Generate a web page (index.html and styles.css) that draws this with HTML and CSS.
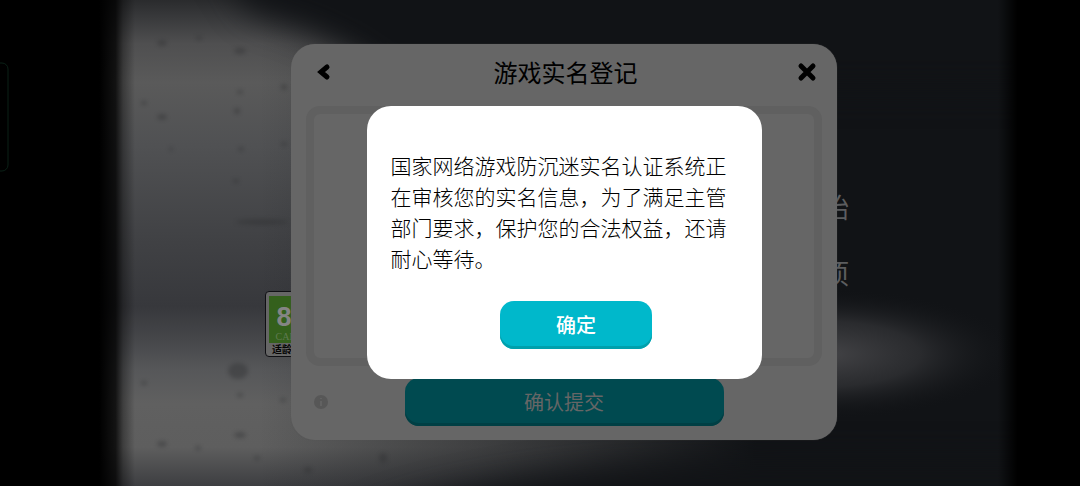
FILE: index.html
```html
<!DOCTYPE html>
<html lang="zh-CN">
<head>
<meta charset="utf-8">
<meta name="viewport" content="width=device-width, initial-scale=1">
<title>游戏实名登记</title>
<link rel="stylesheet" href="styles.css">
</head>
<body>
<main class="stage">
  <svg class="scene" viewBox="0 0 1080 486" preserveAspectRatio="none" aria-hidden="true">
    <defs>
      <linearGradient id="wall" x1="0" y1="0" x2="0" y2="1">
        <stop offset="0" stop-color="#2a2b2d"/>
        <stop offset=".03" stop-color="#363739"/>
        <stop offset=".09" stop-color="#4f4f50"/>
        <stop offset=".17" stop-color="#5a5a5a"/>
        <stop offset=".3" stop-color="#505153"/>
        <stop offset=".5" stop-color="#404144"/>
        <stop offset=".63" stop-color="#37383c"/>
        <stop offset=".7" stop-color="#46474a"/>
        <stop offset=".76" stop-color="#565759"/>
        <stop offset=".83" stop-color="#606060"/>
        <stop offset=".92" stop-color="#5e5e5e"/>
        <stop offset="1" stop-color="#3d3e41"/>
      </linearGradient>
      <linearGradient id="night" x1="0" y1="0" x2="1" y2="0">
        <stop offset=".24" stop-color="#111316" stop-opacity="0"/>
        <stop offset=".44" stop-color="#111316" stop-opacity=".4"/>
        <stop offset=".7" stop-color="#111316" stop-opacity="1"/>
      </linearGradient>
      <linearGradient id="sides" x1="0" y1="0" x2="1" y2="0">
        <stop offset=".092" stop-color="#000"/>
        <stop offset=".107" stop-color="#000" stop-opacity=".8"/>
        <stop offset=".114" stop-color="#000" stop-opacity=".35"/>
        <stop offset=".125" stop-color="#000" stop-opacity="0"/>
        <stop offset=".924" stop-color="#000" stop-opacity="0"/>
        <stop offset=".942" stop-color="#000"/>
      </linearGradient>
      <radialGradient id="glow">
        <stop offset="0" stop-color="#454548"/>
        <stop offset=".5" stop-color="#303134" stop-opacity=".8"/>
        <stop offset="1" stop-color="#111316" stop-opacity="0"/>
      </radialGradient>
      <filter id="soft" color-interpolation-filters="sRGB"><feGaussianBlur stdDeviation="2"/></filter>
      <filter id="haze" x="-20%" y="-80%" width="140%" height="260%" color-interpolation-filters="sRGB"><feGaussianBlur stdDeviation="16"/></filter>
    </defs>
    <rect width="1080" height="486" fill="url(#wall)"/>
    <rect width="1080" height="486" fill="url(#night)"/>
    <path d="M205-60H1180V90H400Q340 34 250 12Z" fill="#111316" filter="url(#haze)"/>
    <path d="M330 540Q420 474 760 460H1180V540Z" fill="#111316" filter="url(#haze)"/>
    <ellipse cx="820" cy="354" rx="200" ry="66" fill="url(#glow)"/>
    <g fill="#2d2e30" opacity=".4" filter="url(#soft)">
      <ellipse cx="162" cy="43" rx="5" ry="3"/><ellipse cx="240" cy="51" rx="6" ry="3"/>
      <ellipse cx="162" cy="117" rx="5" ry="3"/><ellipse cx="144" cy="103" rx="3" ry="2"/>
      <ellipse cx="199" cy="38" rx="3" ry="2"/><ellipse cx="240" cy="92" rx="3" ry="2"/>
      <ellipse cx="237" cy="111" rx="3" ry="3"/><ellipse cx="284" cy="87" rx="3" ry="3"/>
      <ellipse cx="171" cy="149" rx="2" ry="2"/><ellipse cx="241" cy="149" rx="3" ry="2"/>
      <ellipse cx="284" cy="144" rx="3" ry="2"/><ellipse cx="236" cy="181" rx="3" ry="2"/>
      <ellipse cx="262" cy="222" rx="26" ry="3"/><ellipse cx="238" cy="371" rx="10" ry="8"/>
      <ellipse cx="240" cy="395" rx="3" ry="2"/><ellipse cx="240" cy="435" rx="6" ry="3"/>
      <ellipse cx="162" cy="444" rx="5" ry="3"/><ellipse cx="283" cy="400" rx="3" ry="2"/>
      <ellipse cx="144" cy="383" rx="3" ry="2"/><ellipse cx="198" cy="448" rx="3" ry="2"/>
      <ellipse cx="257" cy="458" rx="3" ry="2"/><ellipse cx="383" cy="458" rx="4" ry="5"/>
      <ellipse cx="308" cy="470" rx="4" ry="3"/>
    </g>
    <rect width="1080" height="486" fill="url(#sides)"/>
    <rect x="-20" y="63" width="28" height="108" rx="6" fill="none" stroke="#0a2016"/>
  </svg>

  <div class="age-badge">
    <div class="age-mark"><strong>8+</strong><small>CADPA</small></div>
    <span class="age-note">适龄提示</span>
  </div>
  <nav class="menu"><a href="#start">开始</a><a href="#options">选项</a></nav>

  <section class="panel" aria-labelledby="panel-title">
    <header class="panel-head">
      <button class="icon-button" type="button" aria-label="返回">
        <svg width="20" height="20" viewBox="0 0 20 20"><path d="m13 5-6 5 6 5" fill="none" stroke="currentColor" stroke-width="5" stroke-linecap="round" stroke-linejoin="miter"/></svg>
      </button>
      <h1 class="panel-title" id="panel-title">游戏实名登记</h1>
      <button class="icon-button" type="button" aria-label="关闭">
        <svg width="20" height="20" viewBox="0 0 20 20"><path d="m4 4 12 12M16 4 4 16" fill="none" stroke="currentColor" stroke-width="5" stroke-linecap="round"/></svg>
      </button>
    </header>
    <div class="form-frame"></div>
    <footer class="panel-foot">
      <svg class="info" width="16" height="16" viewBox="0 0 16 16" aria-hidden="true"><circle cx="8" cy="8" r="7" fill="#575757"/><path d="M8 7v5M8 4v1" stroke="#626262" stroke-width="2"/></svg>
      <button class="button submit" type="button">确认提交</button>
    </footer>
  </section>

  <section class="dialog" role="dialog" aria-modal="true" aria-describedby="message">
    <p class="message" id="message">国家网络游戏防沉迷实名认证系统正在审核您的实名信息，为了满足主管部门要求，保护您的合法权益，还请耐心等待。</p>
    <button class="button confirm" type="button">确定</button>
  </section>
</main>
</body>
</html>
```
FILE: styles.css
```css
* { box-sizing: border-box; }

body {
  margin: 0;
  background: #000;
  font-family: "Noto Sans CJK SC", sans-serif;
}

.stage {
  position: relative;
  display: grid;
  place-items: center;
  min-height: 100vh;
  padding: 0 0 2px 48px;
  overflow: hidden;
}

.scene {
  position: absolute;
  inset: 0;
  width: 100%;
  height: 100%;
}

.age-badge {
  position: absolute;
  left: calc(50% - 275px);
  top: calc(50% + 48px);
  width: 54px;
  padding: 4px 3px 2px;
  border: 1px solid #101014;
  border-radius: 4px;
  background: #666;
  text-align: center;
}

.age-mark {
  display: grid;
  height: 47px;
  padding-top: 8px;
  background: #34601c;
  color: #858585;
}

.age-mark strong {
  font: 700 27px/27px "Liberation Sans", sans-serif;
}

.age-mark small {
  color: #5f7a50;
  font: 10px/12px "Liberation Serif", serif;
}

.age-note {
  display: block;
  color: #050505;
  font-size: 10px;
  font-weight: 700;
  line-height: 11px;
  white-space: nowrap;
}

.menu {
  position: absolute;
  right: calc(50% - 309px);
  top: calc(50% - 51px);
  display: grid;
  gap: 36px;
}

.menu a {
  color: #5c5d5f;
  font-size: 27px;
  line-height: 30px;
  text-decoration: none;
}

.panel,
.dialog {
  grid-area: 1 / 1;
  position: relative;
  border-radius: 24px;
}

.panel {
  width: min(546px, 94%);
  padding: 12px 15px 14px;
  background: #666;
  box-shadow: 0 0 1px #555;
}

.panel-head {
  display: flex;
  align-items: center;
  justify-content: space-between;
  height: 32px;
  margin: 0 5px 0 8px;
}

.panel-title {
  margin: 0;
  color: #000;
  font-size: 24px;
  font-weight: 400;
  line-height: 32px;
}

.icon-button {
  display: grid;
  padding: 0;
  border: 0;
  background: none;
  color: #000;
}

.form-frame {
  height: 260px;
  margin-top: 18px;
  border: 8px solid #606060;
  border-radius: 14px;
}

.panel-foot {
  display: grid;
  grid-template-columns: 1fr auto 1fr;
  align-items: center;
  margin-top: 12px;
}

.info { margin-left: 7px; }

.button {
  border: 0;
  border-radius: 14px;
  font: 500 20px/24px "Noto Sans CJK SC", sans-serif;
}

.submit {
  width: 319px;
  height: 48px;
  background: #004a50;
  box-shadow: inset 0 -3px #003f44;
  color: #666;
  font-weight: 400;
}

.dialog {
  display: flex;
  flex-direction: column;
  align-items: center;
  width: min(395px, 90%);
  padding: 44px 24px 30px;
  background: #fff;
}

.message {
  margin: 0 0 27px;
  color: #000;
  font-size: 21px;
  font-weight: 300;
  line-height: 31px;
}

.confirm {
  width: 152px;
  height: 48px;
  margin-left: 24px;
  background: #00b8cb;
  box-shadow: inset 0 -3px #00a0ac;
  color: #fff;
}
```
